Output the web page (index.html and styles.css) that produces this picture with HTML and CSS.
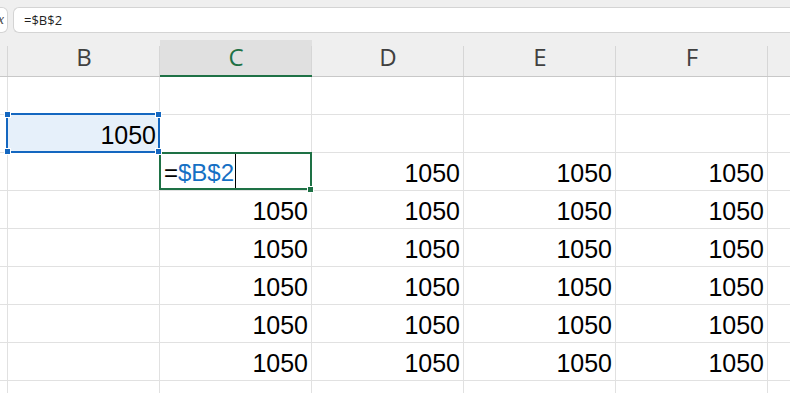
FILE: index.html
```html
<!DOCTYPE html>
<html>
<head>
<meta charset="utf-8">
<link rel="stylesheet" href="styles.css">
</head>
<body>
<div class="formula-bar">
  <div class="fx-stub"><span class="fx">fx</span></div>
  <div class="formula-input">=$B$2</div>
</div>
<div class="sheet">
  <div class="col-head corner"></div>
  <div class="col-head">B</div>
  <div class="col-head active">C</div>
  <div class="col-head">D</div>
  <div class="col-head">E</div>
  <div class="col-head">F</div>
  <div class="col-head rest"></div>

  <div class="row-stub"></div>
  <div class="cell"></div><div class="cell"></div><div class="cell"></div><div class="cell"></div><div class="cell"></div><div class="cell rest"></div>

  <div class="row-stub"></div>
  <div class="cell selected">1050
    <div class="sel-box">
      <span class="handle tl"></span><span class="handle tr"></span><span class="handle bl"></span><span class="handle br"></span>
    </div>
  </div>
  <div class="cell"></div><div class="cell"></div><div class="cell"></div><div class="cell"></div><div class="cell rest"></div>

  <div class="row-stub"></div>
  <div class="cell"></div>
  <div class="cell editing">
    <span class="edit">=<span class="ref">$B$2</span><span class="caret"></span></span>
    <div class="act-box"><span class="fill-handle"></span></div>
  </div>
  <div class="cell">1050</div><div class="cell">1050</div><div class="cell">1050</div><div class="cell rest"></div>

  <div class="row-stub"></div>
  <div class="cell"></div><div class="cell">1050</div><div class="cell">1050</div><div class="cell">1050</div><div class="cell">1050</div><div class="cell rest"></div>

  <div class="row-stub"></div>
  <div class="cell"></div><div class="cell">1050</div><div class="cell">1050</div><div class="cell">1050</div><div class="cell">1050</div><div class="cell rest"></div>

  <div class="row-stub"></div>
  <div class="cell"></div><div class="cell">1050</div><div class="cell">1050</div><div class="cell">1050</div><div class="cell">1050</div><div class="cell rest"></div>

  <div class="row-stub"></div>
  <div class="cell"></div><div class="cell">1050</div><div class="cell">1050</div><div class="cell">1050</div><div class="cell">1050</div><div class="cell rest"></div>

  <div class="row-stub"></div>
  <div class="cell"></div><div class="cell">1050</div><div class="cell">1050</div><div class="cell">1050</div><div class="cell">1050</div><div class="cell rest"></div>

  <div class="row-stub"></div>
  <div class="cell"></div><div class="cell"></div><div class="cell"></div><div class="cell"></div><div class="cell"></div><div class="cell rest"></div>
</div>
</body>
</html>
```

FILE: styles.css
```css
* {
  box-sizing: border-box;
  margin: 0;
  padding: 0;
}

body {
  width: 790px;
  height: 393px;
  overflow: hidden;
  background: #ffffff;
  font-family: "Liberation Sans", Arial, sans-serif;
}

.formula-bar {
  height: 40px;
  background: #efefef;
  display: flex;
  align-items: flex-start;
  padding-top: 7px;
  gap: 5px;
}

.fx-stub {
  width: 8px;
  height: 26px;
  flex: none;
  background: #ffffff;
  border: 1px solid #d4d4d4;
  border-left: none;
  border-radius: 0 6px 6px 0;
  overflow: hidden;
  display: flex;
  justify-content: flex-end;
}

.fx {
  font-family: "Liberation Serif", serif;
  font-style: italic;
  font-size: 14px;
  line-height: 24px;
  color: #444444;
  padding-right: 3px;
  white-space: nowrap;
}

.formula-input {
  flex: 1;
  height: 26px;
  background: #ffffff;
  border: 1px solid #d4d4d4;
  border-right: none;
  border-radius: 6px 0 0 6px;
  padding: 1px 0 0 10px;
  font-family: "Open Sans", sans-serif;
  font-size: 13px;
  line-height: 23px;
  color: #1f1f1f;
}

.sheet {
  display: grid;
  grid-template-columns: 8px repeat(5, 152px) 1fr;
  grid-template-rows: 37px repeat(8, 38px) 13px;
}

.col-head {
  position: relative;
  background: #efefef;
  border-bottom: 1px solid #c8c8c8;
  text-align: center;
  font-family: "Open Sans", sans-serif;
  font-size: 24px;
  line-height: 30px;
  padding-top: 2px;
  color: #404040;
}

.col-head::after {
  content: "";
  position: absolute;
  right: 0;
  top: 6px;
  bottom: 0;
  width: 1px;
  background: #d6d6d6;
}

.col-head.rest::after {
  display: none;
}

.col-head.active {
  background: #e0e0e0;
  color: #1e7145;
  border-bottom: 2px solid #1e7145;
}

.row-stub {
  border-right: 1px solid #e1e1e1;
  border-bottom: 1px solid #e1e1e1;
}

.cell {
  position: relative;
  border-right: 1px solid #e1e1e1;
  border-bottom: 1px solid #e1e1e1;
  display: flex;
  align-items: flex-end;
  justify-content: flex-end;
  padding: 0 3px 5px 3px;
  font-size: 25px;
  line-height: 24px;
  color: #000000;
}

.cell.rest {
  border-right: none;
}

.cell.selected {
  background: #e6f0fa;
}

.sel-box {
  position: absolute;
  top: -2px;
  left: -2px;
  right: -1px;
  bottom: -1px;
  border: 2px solid #1467c0;
  z-index: 3;
}

.handle {
  position: absolute;
  width: 7px;
  height: 7px;
  background: #1467c0;
  border: 1px solid #ffffff;
}

.handle.tl { left: -4px; top: -4px; }
.handle.tr { right: -4px; top: -4px; }
.handle.bl { left: -4px; bottom: -4px; }
.handle.br { right: -4px; bottom: -4px; }

.cell.editing {
  justify-content: flex-start;
  font-size: 24px;
  padding-left: 4px;
}

.edit {
  position: relative;
  color: #000000;
}

.ref {
  color: #1570c4;
}

.caret {
  position: absolute;
  right: -2px;
  top: -7px;
  width: 1px;
  height: 34px;
  background: #000000;
}

.act-box {
  position: absolute;
  top: -1px;
  left: -1px;
  right: -1px;
  bottom: 0;
  border: 2px solid #1e7145;
  z-index: 2;
}

.fill-handle {
  position: absolute;
  right: -4px;
  bottom: -5px;
  width: 7px;
  height: 7px;
  background: #1e7145;
  border: 1px solid #ffffff;
}
```
